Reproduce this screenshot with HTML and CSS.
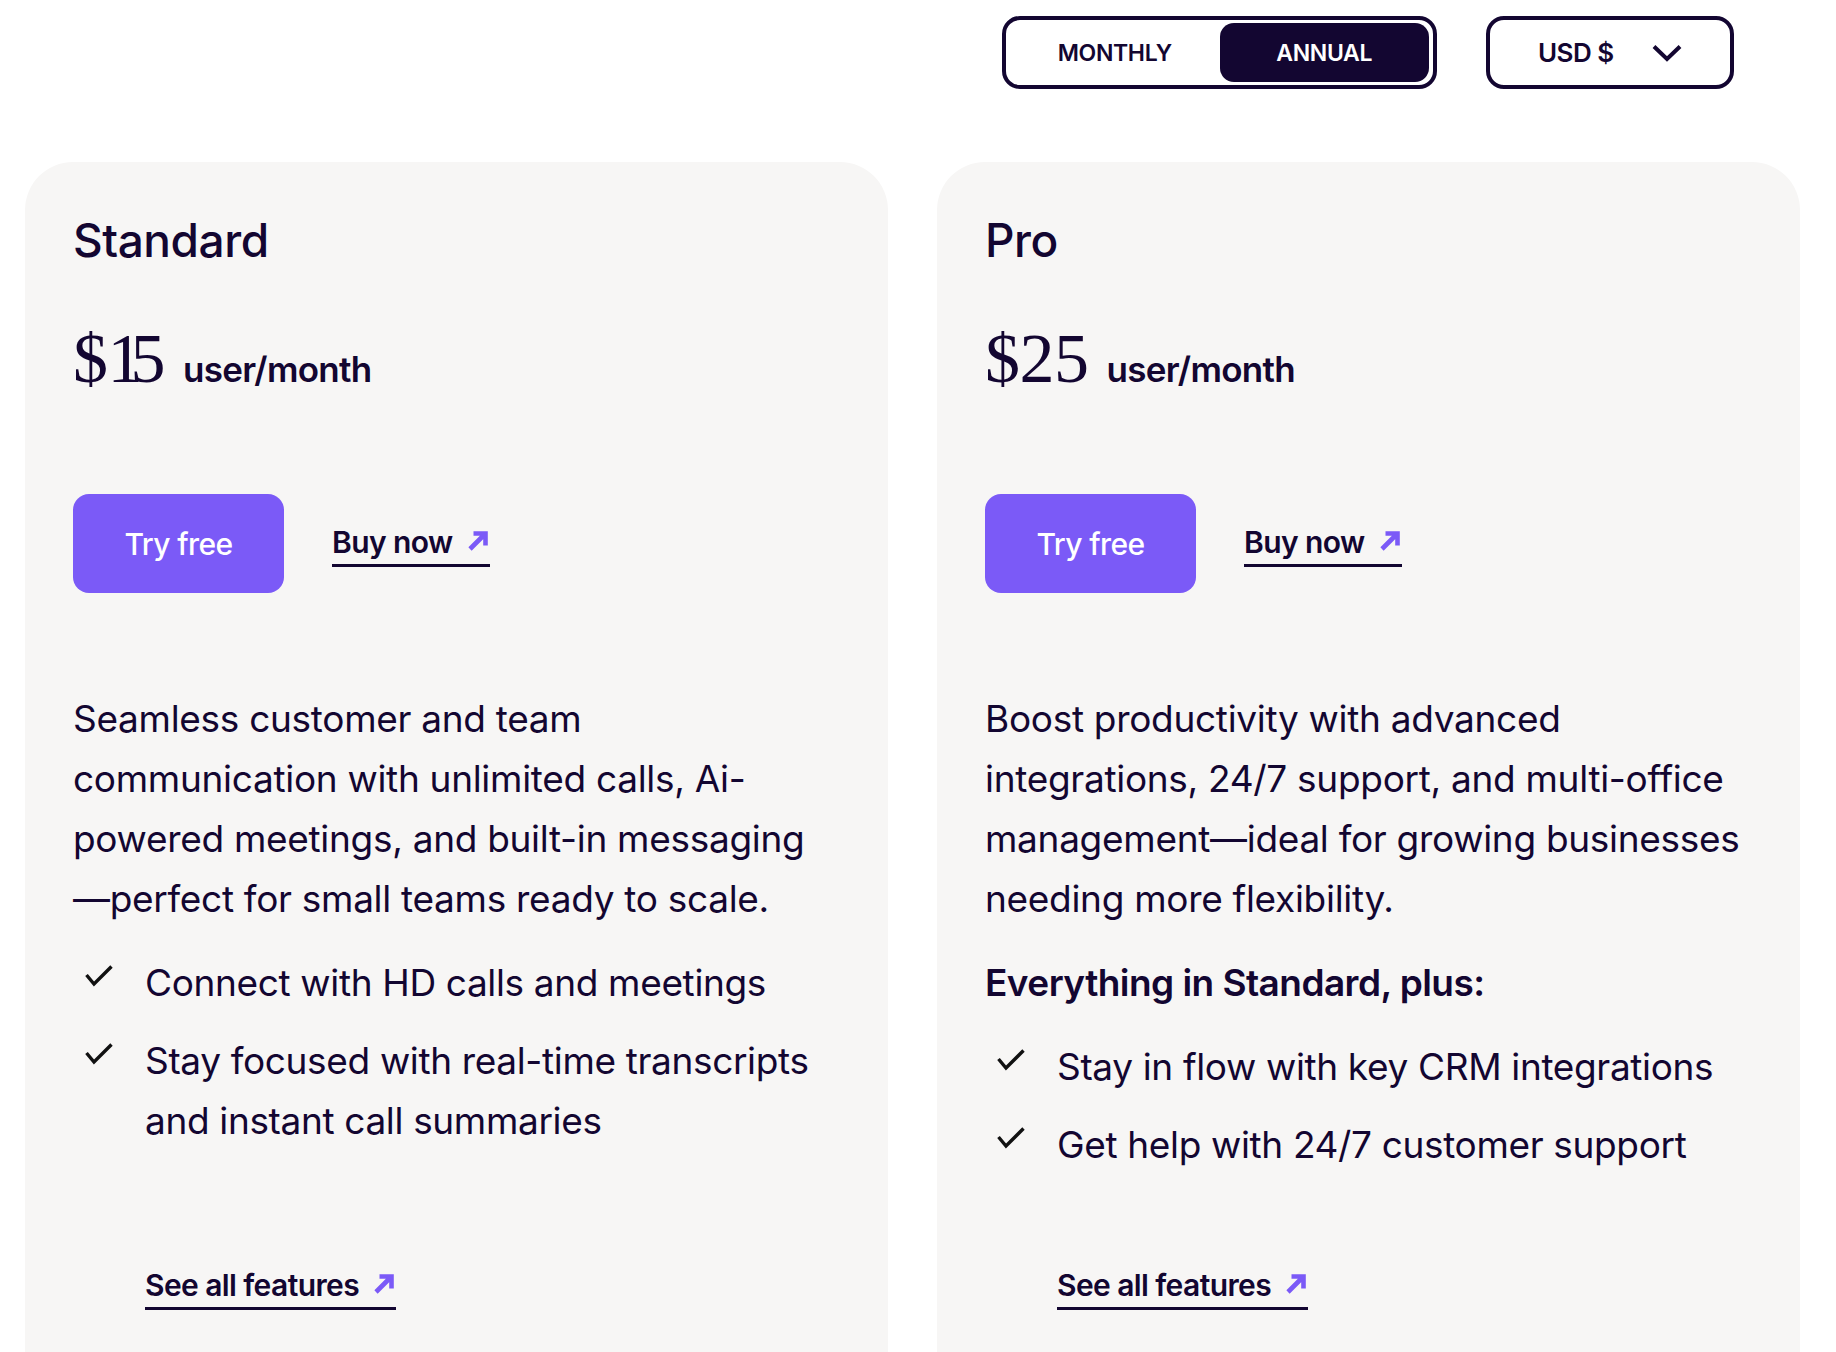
FILE: index.html
```html
<!DOCTYPE html>
<html lang="en">
<head>
<meta charset="utf-8">
<title>Pricing</title>
<link rel="stylesheet" href="styles.css">
</head>
<body>
<div class="page">
  <header class="topbar">
    <div class="billing-toggle">
      <button class="seg">MONTHLY</button>
      <button class="seg seg-active">ANNUAL</button>
    </div>
    <button class="currency">
      <span>USD $</span>
      <svg class="chevron" width="30" height="18" viewBox="0 0 30 18"><path d="M2 2.5 L15 15 L28 2.5" fill="none" stroke="#130631" stroke-width="4"/></svg>
    </button>
  </header>

  <main class="plans">
    <section class="card">
      <h2 class="plan-name">Standard</h2>
      <div class="price"><span class="amount">$<span class="digit-one">1</span>5</span><span class="unit">user/month</span></div>
      <div class="actions">
        <a class="btn-primary" href="#">Try free</a>
        <a class="link-arrow" href="#">Buy now
          <svg class="arrow" width="23" height="23" viewBox="0 0 23 23"><path d="M3 20 L18 5 M6.5 4.5 H18.5 V16.5" fill="none" stroke="#7b5af7" stroke-width="4.6"/></svg>
        </a>
      </div>
      <p class="desc">Seamless customer and team communication with unlimited calls, Ai-powered meetings, and built-in messaging<br>—perfect for small teams ready to scale.</p>
      <ul class="features">
        <li><svg class="check" width="28" height="22" viewBox="0 0 28 22"><path d="M1.5 10 L9 19 L26.5 1.5" fill="none" stroke="#111" stroke-width="3.4"/></svg><span>Connect with HD calls and meetings</span></li>
        <li><svg class="check" width="28" height="22" viewBox="0 0 28 22"><path d="M1.5 10 L9 19 L26.5 1.5" fill="none" stroke="#111" stroke-width="3.4"/></svg><span>Stay focused with real-time transcripts and instant call summaries</span></li>
      </ul>
      <div class="card-foot">
        <a class="link-arrow" href="#">See all features
          <svg class="arrow" width="23" height="23" viewBox="0 0 23 23"><path d="M3 20 L18 5 M6.5 4.5 H18.5 V16.5" fill="none" stroke="#7b5af7" stroke-width="4.6"/></svg>
        </a>
      </div>
    </section>

    <section class="card">
      <h2 class="plan-name">Pro</h2>
      <div class="price"><span class="amount">$25</span><span class="unit">user/month</span></div>
      <div class="actions">
        <a class="btn-primary" href="#">Try free</a>
        <a class="link-arrow" href="#">Buy now
          <svg class="arrow" width="23" height="23" viewBox="0 0 23 23"><path d="M3 20 L18 5 M6.5 4.5 H18.5 V16.5" fill="none" stroke="#7b5af7" stroke-width="4.6"/></svg>
        </a>
      </div>
      <p class="desc">Boost productivity with advanced integrations, 24/7 support, and multi-office management—ideal for growing businesses needing more flexibility.</p>
      <p class="plus">Everything in Standard, plus:</p>
      <ul class="features features-plus">
        <li><svg class="check" width="28" height="22" viewBox="0 0 28 22"><path d="M1.5 10 L9 19 L26.5 1.5" fill="none" stroke="#111" stroke-width="3.4"/></svg><span>Stay in flow with key CRM integrations</span></li>
        <li><svg class="check" width="28" height="22" viewBox="0 0 28 22"><path d="M1.5 10 L9 19 L26.5 1.5" fill="none" stroke="#111" stroke-width="3.4"/></svg><span>Get help with 24/7 customer support</span></li>
      </ul>
      <div class="card-foot">
        <a class="link-arrow" href="#">See all features
          <svg class="arrow" width="23" height="23" viewBox="0 0 23 23"><path d="M3 20 L18 5 M6.5 4.5 H18.5 V16.5" fill="none" stroke="#7b5af7" stroke-width="4.6"/></svg>
        </a>
      </div>
    </section>
  </main>
</div>
</body>
</html>
```

FILE: styles.css
```css
* { box-sizing: border-box; }

html, body {
  margin: 0;
  background: #ffffff;
}

body {
  font-family: Inter, "Noto Sans", "Liberation Sans", sans-serif;
  color: #130631;
}

.page {
  padding: 0 36px 0 25px;
}

.topbar {
  display: flex;
  justify-content: flex-end;
  align-items: center;
  gap: 49px;
  padding: 16px 66px 0 0;
}

.billing-toggle {
  display: grid;
  grid-template-columns: 1fr 1fr;
  width: 435px;
  height: 73px;
  border: 4px solid #130631;
  border-radius: 18px;
  padding: 3px 4px;
  background: #fff;
}

.seg {
  border: 0;
  background: transparent;
  font-family: inherit;
  font-size: 23px;
  font-weight: 600;
  letter-spacing: -0.015em;
  color: #130631;
  border-radius: 14px;
  cursor: pointer;
}

.seg-active {
  background: #130631;
  color: #ffffff;
}

.currency {
  display: flex;
  align-items: center;
  justify-content: space-between;
  width: 248px;
  height: 73px;
  border: 4px solid #130631;
  border-radius: 18px;
  padding: 0 48px;
  background: #fff;
  font-family: inherit;
  font-size: 26px;
  font-weight: 600;
  letter-spacing: -0.02em;
  color: #130631;
  cursor: pointer;
}

.chevron { display: block; }

.plans {
  display: grid;
  grid-template-columns: 1fr 1fr;
  gap: 49px;
  margin-top: 73px;
}

.card {
  display: flex;
  flex-direction: column;
  background: #f7f6f5;
  border-radius: 48px;
  padding: 50px 48px 160px;
}

.plan-name {
  margin: 0;
  font-size: 46px;
  line-height: 56px;
  font-weight: 500;
  letter-spacing: -0.01em;
}

.price {
  display: flex;
  align-items: baseline;
  margin-top: 58px;
}

.amount {
  font-family: "Liberation Serif", "DejaVu Serif", serif;
  font-size: 70px;
  line-height: 66px;
  letter-spacing: -0.5px;
  margin-right: 18px;
}

.digit-one {
  letter-spacing: -12px;
}

.unit {
  font-size: 35px;
  line-height: 35px;
  font-weight: 600;
  letter-spacing: -0.02em;
}

.actions {
  display: flex;
  align-items: center;
  gap: 48px;
  margin-top: 102px;
}

.actions .link-arrow {
  margin-top: 7px;
}

.btn-primary {
  display: inline-flex;
  align-items: center;
  justify-content: center;
  width: 211px;
  height: 99px;
  border-radius: 16px;
  background: #7b5af7;
  color: #ffffff;
  font-size: 30px;
  font-weight: 500;
  letter-spacing: -0.02em;
  text-decoration: none;
}

.link-arrow {
  display: inline-flex;
  align-items: center;
  gap: 14px;
  font-size: 30px;
  line-height: 30px;
  font-weight: 600;
  letter-spacing: -0.02em;
  color: #130631;
  text-decoration: none;
  border-bottom: 3px solid #130631;
  padding-bottom: 7px;
}

.arrow {
  display: block;
  margin-top: -4px;
}

.desc {
  margin: 96px 0 0;
  font-size: 37px;
  line-height: 60px;
  letter-spacing: -0.3px;
}

.plus {
  margin: 24px 0 0;
  font-size: 37px;
  line-height: 60px;
  font-weight: 600;
  letter-spacing: -0.015em;
}

.features {
  list-style: none;
  margin: 24px 0 0;
  padding: 0;
  display: flex;
  flex-direction: column;
  gap: 18px;
}

.features-plus {
  margin-top: 24px;
}

.features li {
  display: grid;
  grid-template-columns: 72px 1fr;
  font-size: 37px;
  line-height: 60px;
  letter-spacing: -0.35px;
}

.check {
  display: block;
  margin: 12px 0 0 12px;
}

.card-foot {
  margin-top: auto;
  padding-top: 95px;
  padding-left: 72px;
}
```
